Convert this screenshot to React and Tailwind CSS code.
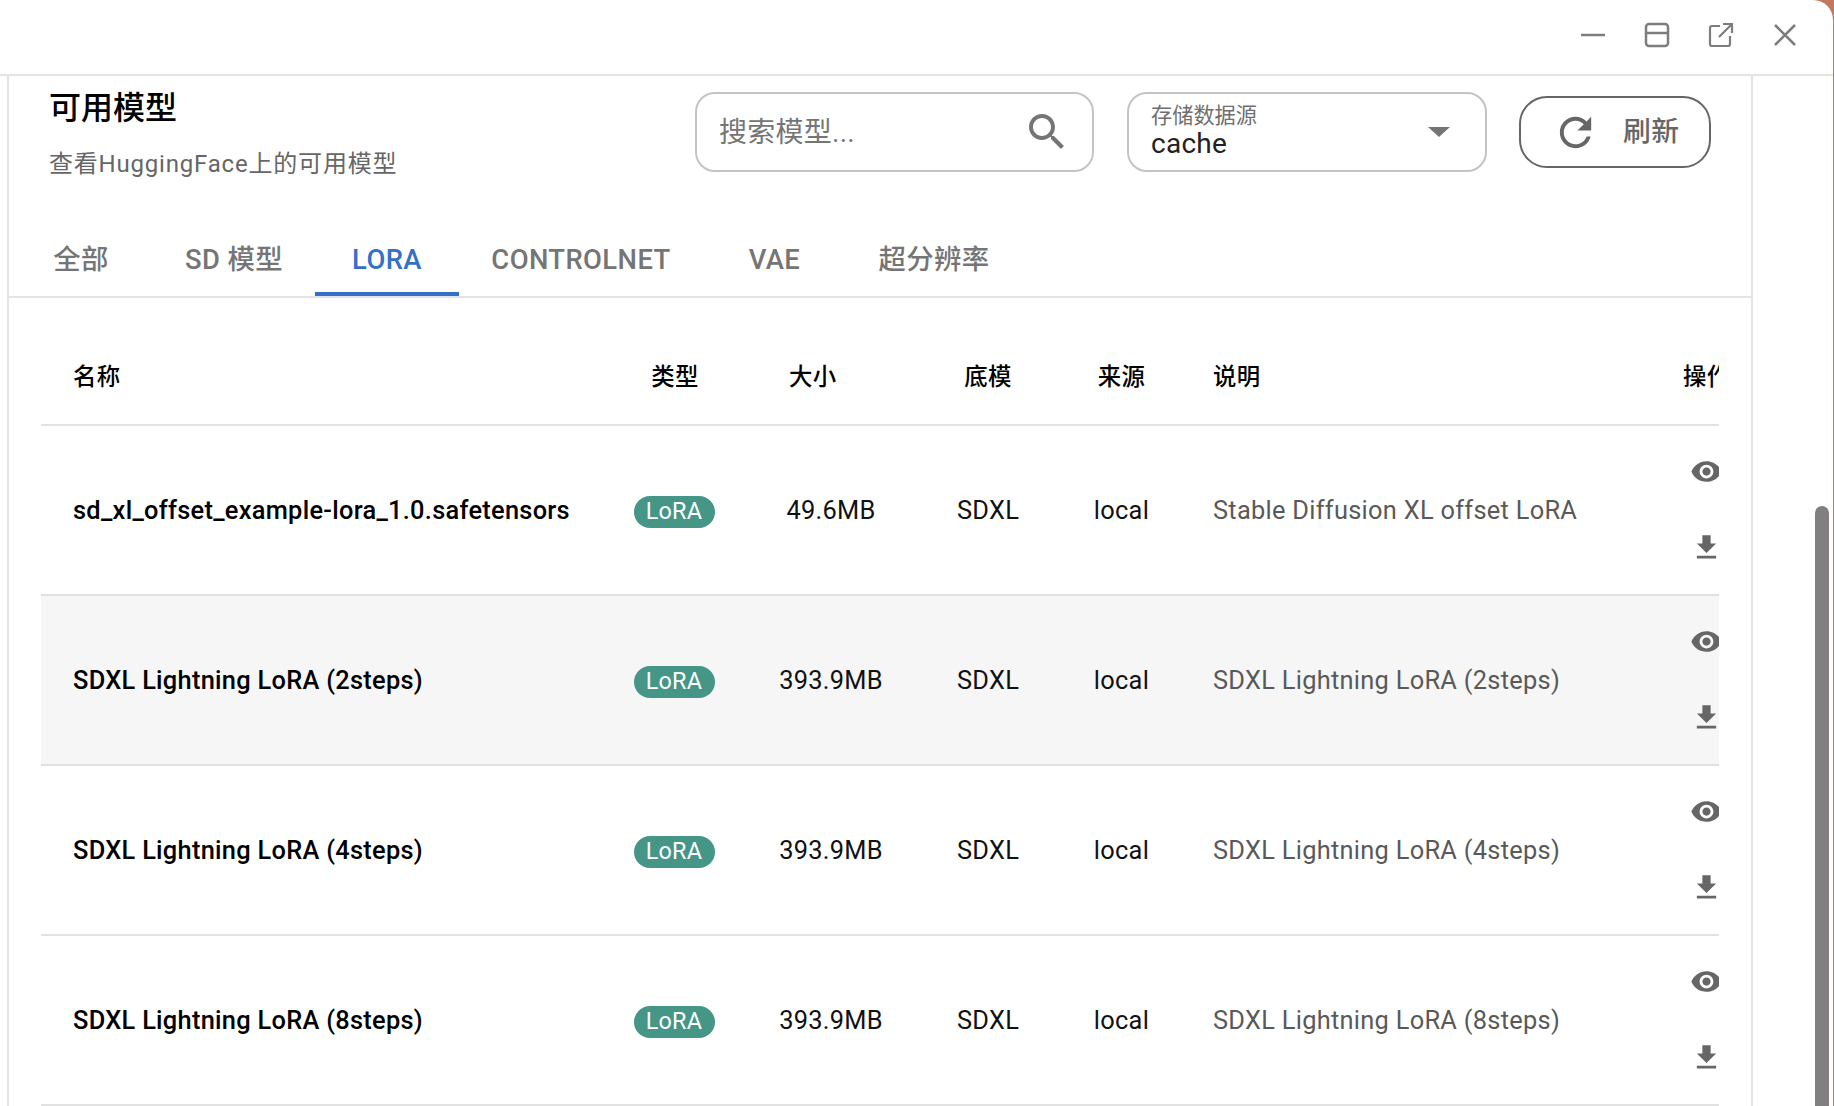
const rows = [
  ['sd_xl_offset_example-lora_1.0.safetensors', '49.6MB', 'Stable Diffusion XL offset LoRA', false],
  ['SDXL Lightning LoRA (2steps)', '393.9MB', 'SDXL Lightning LoRA (2steps)', true],
  ['SDXL Lightning LoRA (4steps)', '393.9MB', 'SDXL Lightning LoRA (4steps)', false],
  ['SDXL Lightning LoRA (8steps)', '393.9MB', 'SDXL Lightning LoRA (8steps)', false],
];

const tabs = [
  ['全部', 'w-[128px]', false],
  ['SD 模型', 'w-[170px] pl-[8px]', false],
  ['LORA', 'w-[144px]', true],
  ['CONTROLNET', 'w-[244px]', false],
  ['VAE', 'w-[143px]', false],
  ['超分辨率', 'w-[176px]', false],
];

function MuiIcon({ d, className }) {
  return (
    <svg viewBox="0 0 24 24" className={className} fill="currentColor">
      <path d={d} />
    </svg>
  );
}

const SEARCH = 'M15.5 14h-.79l-.28-.27C15.41 12.59 16 11.11 16 9.5 16 5.91 13.09 3 9.5 3S3 5.91 3 9.5 5.91 16 9.5 16c1.61 0 3.09-.59 4.23-1.57l.27.28v.79l5 4.99L20.49 19l-4.99-5zm-6 0C7.01 14 5 11.99 5 9.5S7.01 5 9.5 5 14 7.01 14 9.5 11.99 14 9.5 14z';
const REFRESH = 'M17.65 6.35C16.2 4.9 14.21 4 12 4c-4.42 0-7.99 3.58-7.99 8s3.57 8 7.99 8c3.73 0 6.84-2.55 7.73-6h-2.08c-.82 2.33-3.04 4-5.65 4-3.31 0-6-2.69-6-6s2.69-6 6-6c1.66 0 3.14.69 4.22 1.78L13 11h7V4l-2.35 2.35z';
const EYE = 'M12 4.5C7 4.5 2.73 7.61 1 12c1.73 4.39 6 7.5 11 7.5s9.27-3.11 11-7.5c-1.73-4.39-6-7.5-11-7.5zM12 17c-2.76 0-5-2.24-5-5s2.24-5 5-5 5 2.24 5 5-2.24 5-5 5zm0-8c-1.66 0-3 1.34-3 3s1.34 3 3 3 3-1.34 3-3-1.34-3-3-3z';
const DOWNLOAD = 'M5 20h14v-2H5v2zM19 9h-4V3H9v6H5l7 7 7-7z';

function WindowControls() {
  return (
    <div className="h-[76px] shrink-0 flex items-center justify-end pr-4 pb-[5px] border-b-2 border-[#e4e4e4] text-[#7d7d7d]">
      <div className="w-16 flex justify-center">
        <svg width="26" height="24" viewBox="0 0 26 24"><path d="M1 12h24" stroke="currentColor" strokeWidth="2.5" /></svg>
      </div>
      <div className="w-16 flex justify-center">
        <svg width="26" height="26" viewBox="0 0 26 26" fill="none" stroke="currentColor" strokeWidth="2.5">
          <rect x="2" y="2" width="22" height="22" rx="3" />
          <path d="M2 11h22" />
        </svg>
      </div>
      <div className="w-16 flex justify-center">
        <svg width="26" height="26" viewBox="0 0 26 26" fill="none" stroke="currentColor" strokeWidth="2.2">
          <path d="M12 4H4a2 2 0 0 0-2 2v16a2 2 0 0 0 2 2h16a2 2 0 0 0 2-2v-8" />
          <path d="M11 15L24 2M15 2h9v9" />
        </svg>
      </div>
      <div className="w-16 flex justify-center">
        <svg width="24" height="24" viewBox="0 0 24 24" fill="none" stroke="currentColor" strokeWidth="2.6">
          <path d="M2 2l20 20M22 2L2 22" />
        </svg>
      </div>
    </div>
  );
}

function Header() {
  return (
    <div className="h-[152px] flex items-start justify-between pl-[40px] pr-[40px] pt-[16px]">
      <div>
        <div className="h-[32px] text-[32px] leading-[32px] font-medium text-black">可用模型</div>
        <div className="mt-[26px] text-[24px] leading-[28px] tracking-[0.8px] text-[#666666]">查看HuggingFace上的可用模型</div>
      </div>
      <div className="flex items-start">
        <div className="w-[399px] h-[80px] rounded-[20px] border-2 border-[#c4c4c4] flex items-center justify-between pl-[22px] pr-[21px]">
          <span className="text-[28px] leading-[42px] pt-[2px] tracking-[0.25px] text-[#757575]">搜索模型...</span>
          <MuiIcon d={SEARCH} className="w-[48px] h-[48px] text-[#757575]" />
        </div>
        <div className="ml-[33px] w-[360px] h-[80px] rounded-[20px] border-2 border-[#c4c4c4] flex items-center justify-between pl-[22px] pr-[35px]">
          <div className="flex flex-col">
            <span className="text-[21.2px] leading-[24px] text-[#6f6f6f]">存储数据源</span>
            <span className="text-[28px] leading-[32px] tracking-[0.25px] text-[#222222]">cache</span>
          </div>
          <span className="w-0 h-0 border-x-[11px] border-x-transparent border-t-[10px] border-t-[#757575]" />
        </div>
        <div className="ml-[32px] mt-[4px] w-[192px] h-[72px] rounded-[28px] border-2 border-[#666666] flex items-center pl-[31px] text-[#666666]">
          <svg viewBox="0 0 24 24" className="w-[47px] h-[47px]" fill="currentColor"><path d={REFRESH} /></svg>
          <span className="ml-[24px] text-[27.8px] font-medium tracking-[0.5px]">刷新</span>
        </div>
      </div>
    </div>
  );
}

function Tabs() {
  return (
    <div className="h-[70px] shrink-0 flex pl-[8px] border-b-2 border-[#e4e4e4]">
      {tabs.map(([label, w, active]) => (
        <div
          key={label}
          className={
            active
              ? `${w} h-[68px] pt-[1px] border-b-4 border-[#3470c8] flex items-center justify-center text-[27.4px] font-medium tracking-[0.4px] text-[#3470c8]`
              : `${w} h-[68px] pt-[1px] border-b-4 border-transparent flex items-center justify-center text-[27.4px] font-medium tracking-[0.4px] text-[#757575]`
          }
        >
          {label}
        </div>
      ))}
    </div>
  );
}

function ModelTable() {
  return (
    <div className="ml-[32px] w-[1678px] overflow-hidden pt-[32px]">
      <table className="table-fixed w-[1702px] border-separate border-spacing-0 text-[25.4px] tracking-[0.28px]">
        <thead>
          <tr className="h-[96px] text-black font-medium text-[23.4px]">
            <th className="w-[583px] pl-[32px] pt-[2px] text-left font-medium border-b-2 border-[#e2e2e2]">名称</th>
            <th className="w-[102px] pt-[2px] text-center font-medium border-b-2 border-[#e2e2e2]">类型</th>
            <th className="w-[210px] pl-[63px] pt-[2px] text-left font-medium border-b-2 border-[#e2e2e2]">大小</th>
            <th className="w-[104px] pt-[2px] text-center font-medium border-b-2 border-[#e2e2e2]">底模</th>
            <th className="w-[163px] pt-[2px] text-center font-medium border-b-2 border-[#e2e2e2]">来源</th>
            <th className="w-[470px] pl-[10px] pt-[2px] text-left font-medium border-b-2 border-[#e2e2e2]">说明</th>
            <th className="w-[70px] pl-[10px] pt-[2px] text-left font-medium border-b-2 border-[#e2e2e2] whitespace-nowrap">操作</th>
          </tr>
        </thead>
        <tbody>
          {rows.map(([name, size, desc, shaded]) => (
            <tr key={name} className={shaded ? 'h-[170px] bg-[#f6f6f6]' : 'h-[170px]'}>
              <td className="pl-[32px] font-medium text-black border-b-2 border-[#e2e2e2] whitespace-nowrap">{name}</td>
              <td className="pr-[2px] text-center border-b-2 border-[#e2e2e2]">
                <span className="inline-flex w-[81px] h-[32px] mb-[1px] rounded-full bg-[#459687] text-white text-[23.4px] items-center justify-center align-middle">LoRA</span>
              </td>
              <td className="text-center text-[#111111] border-b-2 border-[#e2e2e2]">{size}</td>
              <td className="text-center text-[#111111] border-b-2 border-[#e2e2e2]">SDXL</td>
              <td className="text-center text-[#111111] border-b-2 border-[#e2e2e2]">local</td>
              <td className="pl-[10px] text-[#595959] border-b-2 border-[#e2e2e2] whitespace-nowrap">{desc}</td>
              <td className="pl-[17px] pb-[2px] text-[#666666] border-b-2 border-[#e2e2e2]">
                <div className="flex flex-col gap-[43px]">
                  <MuiIcon d={EYE} className="w-[33px] h-[33px]" />
                  <MuiIcon d={DOWNLOAD} className="w-[33px] h-[33px]" />
                </div>
              </td>
            </tr>
          ))}
        </tbody>
      </table>
    </div>
  );
}

export default function App() {
  return (
    <div className="w-[1834px] h-[1106px] overflow-hidden bg-[#c2795f] font-['Roboto','Noto_Sans_CJK_SC',sans-serif]">
      <div className="w-[1833px] h-full bg-white rounded-tr-[20px] flex flex-col overflow-hidden">
        <WindowControls />
        <div className="flex flex-1 min-h-0">
          <div className="w-[7px] shrink-0" />
          <div className="w-[1746px] shrink-0 border-x-2 border-[#e4e4e4] flex flex-col overflow-hidden">
            <Header />
            <Tabs />
            <ModelTable />
          </div>
          <div className="flex-1 flex justify-end pr-[4px] pt-[430px]">
            <div className="w-[14px] rounded-t-full bg-[#808080]" />
          </div>
        </div>
      </div>
    </div>
  );
}
